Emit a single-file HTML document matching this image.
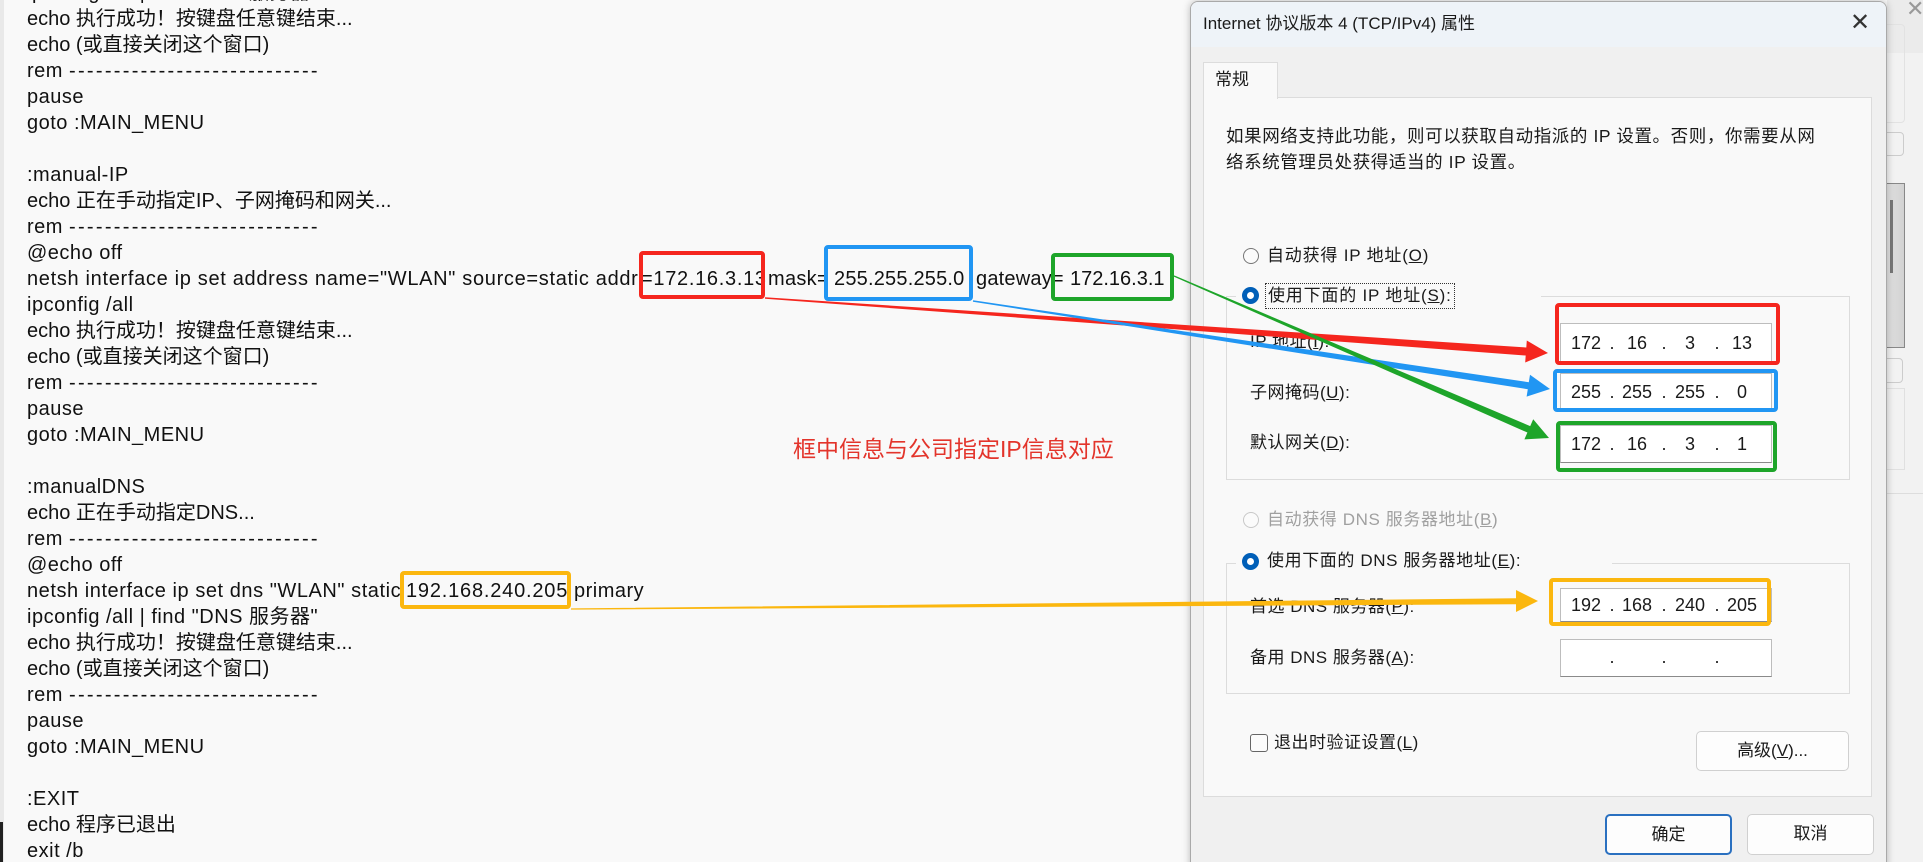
<!DOCTYPE html>
<html><head><meta charset="utf-8"><style>
*{margin:0;padding:0;box-sizing:border-box}
html,body{width:1923px;height:862px;overflow:hidden;background:#f9f9f9;position:relative}
.c{position:absolute;left:27px;font:20px/26px "Liberation Sans","Noto Sans CJK SC",sans-serif;color:#111;white-space:pre;letter-spacing:.5px}
.c .r{letter-spacing:2.3px}
.c .z{letter-spacing:0}
.a{position:absolute;white-space:pre;font-family:"Liberation Sans","Noto Sans CJK SC",sans-serif;color:#1a1a1a}
.d{font-size:17px;line-height:22px}
.box{position:absolute;border:4px solid;border-radius:4px}
.fld{position:absolute;left:1560px;width:212px;background:#fff;border:1px solid #bdbdbd;border-bottom-color:#8a8a8a}
.rad{position:absolute;width:16px;height:16px;border-radius:50%;border:1.5px solid #777;background:#fbfbfb}
.radc{position:absolute;width:17px;height:17px;border-radius:50%;border:5px solid #005fb8;background:#fff}
.dig{position:absolute;font:18px/20px "Liberation Sans",sans-serif;color:#1a1a1a;transform:translateX(-50%)}
.btn{position:absolute;background:#fdfdfd;border:1px solid #d0d0d0;border-radius:5px;text-align:center;font:17px/38px "Liberation Sans","Noto Sans CJK SC",sans-serif;color:#1a1a1a}
</style></head><body>
<div style="position:absolute;left:0;top:0;width:4px;height:862px;background:#e9e9e9"></div>
<div style="position:absolute;left:0;top:822px;width:3px;height:40px;background:#222"></div>

<div class="c" style="top:-20px">ipconfig /all | find "DNS 服务器"
<span class="z">echo 执行成功！按键盘任意键结束...
echo (或直接关闭这个窗口)</span>
rem <span class="r">----------------------------</span>
pause
goto :MAIN_MENU

:manual-IP
<span class="z">echo 正在手动指定IP、子网掩码和网关...</span>
rem <span class="r">----------------------------</span>
@echo off
</div>
<div class="c" style="top:266px;letter-spacing:.68px">netsh interface ip set address name="WLAN" source=static addr</div>
<div class="c" style="top:266px;left:641px;letter-spacing:.7px">=172.16.3.13</div>
<div class="c" style="top:266px;left:768px;letter-spacing:.3px">mask=</div>
<div class="c" style="top:266px;left:834px;letter-spacing:.2px">255.255.255.0</div>
<div class="c" style="top:266px;left:976px;letter-spacing:.2px">gateway=</div>
<div class="c" style="top:266px;left:1070px;letter-spacing:0">172.16.3.1</div>
<div class="c" style="top:292px">ipconfig /all
<span class="z">echo 执行成功！按键盘任意键结束...
echo (或直接关闭这个窗口)</span>
rem <span class="r">----------------------------</span>
pause
goto :MAIN_MENU

:manualDNS
<span class="z">echo 正在手动指定DNS...</span>
rem <span class="r">----------------------------</span>
@echo off
</div>
<div class="c" style="top:578px;letter-spacing:.55px">netsh interface ip set dns "WLAN" static</div>
<div class="c" style="top:578px;left:406px;letter-spacing:.8px">192.168.240.205</div>
<div class="c" style="top:578px;left:574px">primary</div>
<div class="c" style="top:604px">ipconfig /all | find "DNS 服务器"
<span class="z">echo 执行成功！按键盘任意键结束...
echo (或直接关闭这个窗口)</span>
rem <span class="r">----------------------------</span>
pause
goto :MAIN_MENU

:EXIT
<span class="z">echo 程序已退出</span>
exit /b</div>

<div class="box" style="left:639px;top:251px;width:126px;height:48px;border-color:#f5261e"></div>
<div class="box" style="left:824px;top:245px;width:149px;height:56px;border-color:#2196f3"></div>
<div class="box" style="left:1051px;top:253px;width:123px;height:48px;border-color:#1ea52a"></div>
<div class="box" style="left:400px;top:571px;width:171px;height:38px;border-color:#fbb70f"></div>
<div class="a" style="left:793px;top:435px;font-size:23px;line-height:28px;color:#e3342b">框中信息与公司指定IP信息对应</div>

<!-- right strip -->
<div style="position:absolute;left:1887px;top:0;width:36px;height:862px;background:#f2f2f2"></div>
<div style="position:absolute;left:1887px;top:0;width:36px;height:53px;background:#ebebeb"></div>
<div class="a" style="left:1906px;top:-4px;font-size:22px;color:#999">✕</div>
<div style="position:absolute;left:1880px;top:24px;width:25px;height:99px;border:1px solid #e2e2e2;border-radius:4px"></div>
<div style="position:absolute;left:1880px;top:132px;width:24px;height:24px;border:1px solid #ccc;border-radius:4px"></div>
<div style="position:absolute;left:1880px;top:183px;width:25px;height:165px;border:1px solid #888;background:linear-gradient(90deg,#e6e6e6,#d2d2d2)"></div>
<div style="position:absolute;left:1890px;top:200px;width:3px;height:73px;background:#777"></div>
<div style="position:absolute;left:1880px;top:358px;width:23px;height:25px;border:1px solid #ccc;border-radius:4px"></div>
<div style="position:absolute;left:1880px;top:388px;width:25px;height:82px;border:1px solid #e0e0e0"></div>
<div style="position:absolute;left:1887px;top:493px;width:36px;height:1px;background:#ddd"></div>

<!-- dialog -->
<div style="position:absolute;left:1190px;top:1px;width:697px;height:870px;background:#f0f0f0;border:1px solid #a9a9a9;border-radius:8px 8px 0 0;box-shadow:0 0 8px rgba(0,0,0,.25)"></div>
<div style="position:absolute;left:1191px;top:2px;width:695px;height:45px;background:#eef3f8;border-radius:7px 7px 0 0"></div>
<div class="a" style="left:1203px;top:12px;font-size:17px;line-height:24px">Internet 协议版本 4 (TCP/IPv4) 属性</div>
<div class="a" style="left:1850px;top:6px;font-size:24px;line-height:34px;color:#333">✕</div>
<div style="position:absolute;left:1203px;top:97px;width:669px;height:700px;background:#f9f9f9;border:1px solid #dcdcdc"></div>
<div style="position:absolute;left:1203px;top:62px;width:75px;height:37px;background:#f9f9f9;border:1px solid #dcdcdc;border-bottom:none"></div>
<div class="a d" style="left:1215px;top:69px">常规</div>
<div class="a d" style="left:1226px;top:123px;font-size:17.5px;line-height:26px;letter-spacing:.6px">如果网络支持此功能，则可以获取自动指派的 IP 设置。否则，你需要从网
络系统管理员处获得适当的 IP 设置。</div>

<div class="rad" style="left:1243px;top:248px"></div>
<div class="a d" style="left:1267px;top:245px;letter-spacing:.8px">自动获得 IP 地址(<u>O</u>)</div>
<div style="position:absolute;left:1226px;top:296px;width:624px;height:184px;border:1px solid #dcdcdc"></div>
<div style="position:absolute;left:1236px;top:280px;width:305px;height:30px;background:#f9f9f9"></div>
<div class="radc" style="left:1242px;top:287px"></div>
<div class="a d" style="left:1265px;top:283px;letter-spacing:.8px;border:1px dotted #333;padding:1px 2px">使用下面的 IP 地址(<u>S</u>):</div>
<div class="a d" style="left:1250px;top:331px;letter-spacing:.5px">IP 地址(<u>I</u>):</div>
<div class="a d" style="left:1250px;top:382px;letter-spacing:.5px">子网掩码(<u>U</u>):</div>
<div class="a d" style="left:1250px;top:432px;letter-spacing:.5px">默认网关(<u>D</u>):</div>

<div class="fld" style="top:323px;height:39px"></div>
<div class="fld" style="top:373px;height:37px"></div>
<div class="fld" style="top:425px;height:38px"></div>
<div class="dig" style="left:1586px;top:333px">172</div><div class="dig" style="left:1612px;top:333px">.</div><div class="dig" style="left:1637px;top:333px">16</div><div class="dig" style="left:1664px;top:333px">.</div><div class="dig" style="left:1690px;top:333px">3</div><div class="dig" style="left:1717px;top:333px">.</div><div class="dig" style="left:1742px;top:333px">13</div>
<div class="dig" style="left:1586px;top:382px">255</div><div class="dig" style="left:1612px;top:382px">.</div><div class="dig" style="left:1637px;top:382px">255</div><div class="dig" style="left:1664px;top:382px">.</div><div class="dig" style="left:1690px;top:382px">255</div><div class="dig" style="left:1717px;top:382px">.</div><div class="dig" style="left:1742px;top:382px">0</div>
<div class="dig" style="left:1586px;top:434px">172</div><div class="dig" style="left:1612px;top:434px">.</div><div class="dig" style="left:1637px;top:434px">16</div><div class="dig" style="left:1664px;top:434px">.</div><div class="dig" style="left:1690px;top:434px">3</div><div class="dig" style="left:1717px;top:434px">.</div><div class="dig" style="left:1742px;top:434px">1</div>
<div class="box" style="left:1555px;top:303px;width:225px;height:62px;border-color:#f5261e"></div>
<div class="box" style="left:1553px;top:369px;width:225px;height:43px;border-color:#2196f3"></div>
<div class="box" style="left:1556px;top:421px;width:221px;height:51px;border-color:#1ea52a"></div>

<div class="rad" style="left:1243px;top:512px;border-color:#c8c8c8"></div>
<div class="a d" style="left:1267px;top:509px;letter-spacing:.6px;color:#a0a0a0">自动获得 DNS 服务器地址(<u>B</u>)</div>
<div style="position:absolute;left:1226px;top:563px;width:624px;height:131px;border:1px solid #dcdcdc"></div>
<div style="position:absolute;left:1236px;top:548px;width:376px;height:28px;background:#f9f9f9"></div>
<div class="radc" style="left:1242px;top:553px"></div>
<div class="a d" style="left:1267px;top:550px;letter-spacing:.6px">使用下面的 DNS 服务器地址(<u>E</u>):</div>
<div class="a d" style="left:1250px;top:596px;letter-spacing:.5px">首选 DNS 服务器(<u>P</u>):</div>
<div class="a d" style="left:1250px;top:647px;letter-spacing:.5px">备用 DNS 服务器(<u>A</u>):</div>
<div class="fld" style="top:588px;height:34px"></div>
<div class="fld" style="top:639px;height:38px"></div>
<div class="dig" style="left:1586px;top:595px">192</div><div class="dig" style="left:1612px;top:595px">.</div><div class="dig" style="left:1637px;top:595px">168</div><div class="dig" style="left:1664px;top:595px">.</div><div class="dig" style="left:1690px;top:595px">240</div><div class="dig" style="left:1717px;top:595px">.</div><div class="dig" style="left:1742px;top:595px">205</div>
<div class="dig" style="left:1612px;top:647px">.</div><div class="dig" style="left:1664px;top:647px">.</div><div class="dig" style="left:1717px;top:647px">.</div>
<div class="box" style="left:1549px;top:578px;width:222px;height:48px;border-color:#fbb70f"></div>

<div style="position:absolute;left:1250px;top:734px;width:18px;height:18px;border:1.5px solid #666;border-radius:3px;background:#fbfbfb"></div>
<div class="a d" style="left:1274px;top:732px;letter-spacing:.5px">退出时验证设置(<u>L</u>)</div>
<div class="btn" style="left:1696px;top:731px;width:153px;height:40px">高级(<u>V</u>)...</div>
<div class="btn" style="left:1605px;top:814px;width:127px;height:41px;border:2px solid #2a70c0">确定</div>
<div class="btn" style="left:1747px;top:814px;width:127px;height:41px">取消</div>

<svg style="position:absolute;left:0;top:0" width="1923" height="862">
<polygon fill="#f5261e" points="765,297.3 1526.3,347.5 1526.8,340.5 1548,353 1525.2,362.5 1525.7,355.5 765,298.7"/>
<polygon fill="#2196f3" points="973.1,300.3 1528.8,382.2 1530,374.8 1550,389 1526.6,396.6 1527.8,389.2 972.9,301.7"/>
<polygon fill="#1ea52a" points="1174.2,275.4 1530.2,426.1 1533.2,419.2 1549,438 1524.4,439.4 1527.4,432.5 1173.8,276.6"/>
<polygon fill="#fbb70f" points="571,608.4 1516,598.2 1516,590 1538,601 1516,612 1516,604.2 571,609.6"/>
</svg>
</body></html>
